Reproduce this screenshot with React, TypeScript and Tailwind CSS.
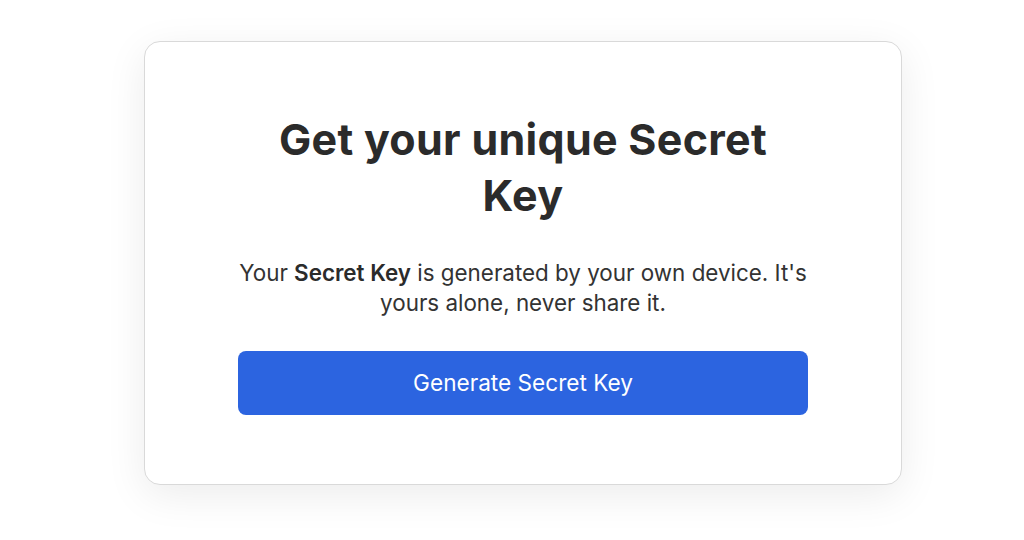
export default function App() {
  return (
    <div className="min-h-[540px] w-full bg-white pl-[144px] pt-[41px] font-['Inter',sans-serif]">
      <div className="flex w-[758px] flex-col items-center rounded-2xl border border-[#d9d9d9] bg-white px-[93px] pb-[69px] pt-[69px] shadow-[0_10px_40px_rgba(0,0,0,0.08)]">
        <h1 className="max-w-[520px] text-center text-[43px] font-bold leading-[56px] tracking-[0.3px] text-[#2b2b2b]">
          Get your unique Secret Key
        </h1>
        <p className="mt-[35px] text-center text-[22.4px] leading-[30px] text-[#333333]">
          Your <span className="font-semibold text-[#2b2b2b]">Secret Key</span> is generated by your own device. It's yours alone, never share it.
        </p>
        <button className="mt-[33px] h-[64px] w-full rounded-lg bg-[#2c64e0] text-[22.6px] text-white">
          Generate Secret Key
        </button>
      </div>
    </div>
  );
}
